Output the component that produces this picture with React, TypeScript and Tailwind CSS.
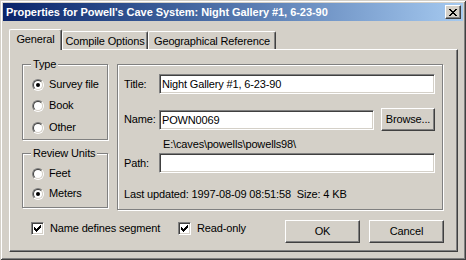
import React from "react";

type Props = { label: string; checked?: boolean; className?: string };

const Radio = ({ label, checked, className = "" }: Props) => (
  <div className={"flex h-[13px] items-center " + className}>
    <span className="flex h-[12px] w-[12px] rounded-full border border-t-[#808080] border-r-white border-b-white border-l-[#808080]">
      <span className="flex h-full w-full items-center justify-center rounded-full border border-t-[#404040] border-r-[#d4d0c8] border-b-[#d4d0c8] border-l-[#404040] bg-white">
        {checked && <span className="h-[4px] w-[4px] rounded-full bg-black" />}
      </span>
    </span>
    <span className="ml-[5px]">{label}</span>
  </div>
);

const Check = ({ label, checked, className = "" }: Props) => (
  <div className={"flex h-[13px] items-center " + className}>
    <span className="flex h-[13px] w-[13px] items-center justify-center border border-t-[#808080] border-r-white border-b-white border-l-[#808080] bg-white shadow-[inset_1px_1px_#404040,inset_-1px_-1px_#d4d0c8]">
      {checked && (
        <svg width="7" height="7" viewBox="0 0 7 7" shapeRendering="crispEdges">
          <path
            fill="#000"
            d="M6 0h1v1H6z M5 1h2v1H5z M0 2h1v1H0z M4 2h3v1H4z M0 3h2v1H0z M3 3h3v1H3z M0 4h5v1H0z M1 5h3v1H1z M2 6h1v1H2z"
          />
        </svg>
      )}
    </span>
    <span className="ml-[6px]">{label}</span>
  </div>
);

const Button = ({
  children,
  className = "",
}: {
  children: React.ReactNode;
  className?: string;
}) => (
  <button className={"flex h-[23px] items-center justify-center border border-t-white border-r-[#404040] border-b-[#404040] border-l-white bg-[#d4d0c8] shadow-[inset_-1px_-1px_#808080] " + className}>
    {children}
  </button>
);

const GroupBox = ({
  caption,
  className = "",
  children,
}: {
  caption?: string;
  className?: string;
  children: React.ReactNode;
}) => (
  <div className={"relative border border-[#808080] shadow-[inset_1px_1px_#fff,1px_1px_#fff] " + className}>
    {caption && (
      <span className="absolute top-[-7px] left-[8px] bg-[#d4d0c8] px-[2px] leading-[13px]">
        {caption}
      </span>
    )}
    {children}
  </div>
);

const Field = ({ value = "", className = "" }: { value?: string; className?: string }) => (
  <input
    readOnly
    defaultValue={value}
    className={"h-[20px] border border-t-[#808080] border-r-white border-b-white border-l-[#808080] bg-white px-[2px] text-[11px] tracking-[-0.15px] shadow-[inset_1px_1px_#404040,inset_-1px_-1px_#d4d0c8] outline-none " + className}
  />
);

export default function App() {
  return (
    <div className="h-[260px] w-[466px] bg-[#d4d0c8] p-[3px] font-['Liberation_Sans',Arial,sans-serif] text-[11px] leading-[13px] tracking-[-0.15px] text-black shadow-[inset_1px_1px_#d4d0c8,inset_-1px_-1px_#404040,inset_2px_2px_#fff,inset_-2px_-2px_#808080]">
      {/* title bar */}
      <div className="flex h-[18px] items-center bg-linear-to-r from-[#0a246a] to-[#a6caf0] pr-[2px] pl-[3px]">
        <span className="font-bold tracking-[-0.05px] text-white">
          Properties for Powell's Cave System: Night Gallery #1, 6-23-90
        </span>
        <button className="ml-auto flex h-[14px] w-[16px] items-center justify-center border border-t-white border-r-[#404040] border-b-[#404040] border-l-white bg-[#d4d0c8] shadow-[inset_-1px_-1px_#808080]">
          <svg width="8" height="7" viewBox="0 0 8 7" shapeRendering="crispEdges">
            <path
              fill="#000"
              d="M0 0h2v1H0z M6 0h2v1H6z M1 1h2v1H1z M5 1h2v1H5z M2 2h4v1H2z M3 3h2v1H3z M2 4h4v1H2z M1 5h2v1H1z M5 5h2v1H5z M0 6h2v1H0z M6 6h2v1H6z"
            />
          </svg>
        </button>
      </div>

      <div className="pt-[8px] pl-[6px]">
        {/* tabs */}
        <div className="relative z-10 -mb-px flex h-[21px] items-end">
          <div className="flex h-[21px] w-[53px] justify-center rounded-t-[2px] border-t border-r border-l border-t-white border-r-[#404040] border-l-white bg-[#d4d0c8] pt-[3px] shadow-[inset_-1px_0_#808080]">
            General
          </div>
          <div className="mb-px flex h-[18px] w-[86px] justify-center rounded-t-[2px] border-t border-r border-l border-t-white border-r-[#404040] border-l-white pt-[3px] shadow-[inset_-1px_0_#808080]">
            Compile Options
          </div>
          <div className="mb-px flex h-[18px] w-[128px] justify-center rounded-t-[2px] border-t border-r border-l border-t-white border-r-[#404040] border-l-white pt-[3px] shadow-[inset_-1px_0_#808080]">
            Geographical Reference
          </div>
        </div>

        {/* panel */}
        <div className="flex h-[203px] w-[449px] flex-col border border-t-white border-r-[#404040] border-b-[#404040] border-l-white pt-[14px] pr-[13px] pl-[12px] shadow-[inset_-1px_-1px_#808080]">
          <div className="flex items-start gap-[9px]">
            <div className="flex w-[86px] flex-col">
              <GroupBox caption="Type" className="h-[76px] pl-[9px]">
                <Radio label="Survey file" checked className="mt-[13px]" />
                <Radio label="Book" className="mt-[8px]" />
                <Radio label="Other" className="mt-[9px]" />
              </GroupBox>
              <GroupBox caption="Review Units" className="mt-[13px] h-[55px] pl-[9px]">
                <Radio label="Feet" className="mt-[13px]" />
                <Radio label="Meters" checked className="mt-[7px]" />
              </GroupBox>
            </div>

            <GroupBox className="flex h-[146px] w-[326px] flex-col pr-[7px] pl-[6px]">
              <div className="mt-[9px] flex h-[20px] items-center">
                <span className="w-[35px]">Title:</span>
                <Field value="Night Gallery #1, 6-23-90" className="flex-1" />
              </div>
              <div className="mt-[14px] flex h-[23px] items-center">
                <span className="w-[35px]">Name:</span>
                <Field value="POWN0069" className="w-[215px]" />
                <Button className="ml-auto w-[54px]">Browse...</Button>
              </div>
              <div className="mt-[7px] h-[13px] pl-[39px]">
                {"E:\\caves\\powells\\powells98\\"}
              </div>
              <div className="mt-[2px] flex h-[20px] items-center">
                <span className="w-[35px]">Path:</span>
                <Field className="flex-1" />
              </div>
              <div className="mt-[15px] h-[13px] whitespace-pre">
                Last updated: 1997-08-09 08:51:58  Size: 4 KB
              </div>
            </GroupBox>
          </div>

          <div className="mt-[10px] flex h-[23px] items-start">
            <Check label="Name defines segment" checked className="mt-[2px] ml-[9px] w-[147px]" />
            <Check label="Read-only" checked className="mt-[2px]" />
            <Button className="ml-auto w-[75px]">OK</Button>
            <Button className="ml-[9px] w-[75px]">Cancel</Button>
          </div>
        </div>
      </div>
    </div>
  );
}
